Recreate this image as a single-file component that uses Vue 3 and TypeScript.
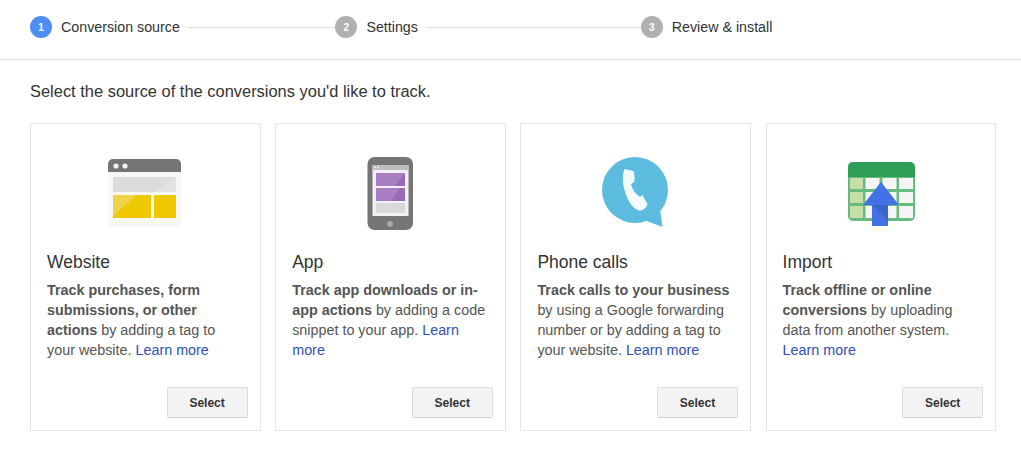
<script setup lang="ts">
interface Step { n: number; label: string; active?: boolean; }
const steps: Step[] = [
  { n: 1, label: 'Conversion source', active: true },
  { n: 2, label: 'Settings' },
  { n: 3, label: 'Review & install' },
];
interface Card { kind: string; title: string; strong: string; rest: string; }
const cards: Card[] = [
  { kind: 'web', title: 'Website', strong: 'Track purchases, form submissions, or other actions', rest: ' by adding a tag to your website. ' },
  { kind: 'app', title: 'App', strong: 'Track app downloads or in-app actions', rest: ' by adding a code snippet to your app. ' },
  { kind: 'phone', title: 'Phone calls', strong: 'Track calls to your business', rest: ' by using a Google forwarding number or by adding a tag to your website. ' },
  { kind: 'import', title: 'Import', strong: 'Track offline or online conversions', rest: ' by uploading data from another system. ' },
];
</script>

<template>
  <div class="page">
    <header class="stepper">
      <div v-for="(s, i) in steps" :key="s.n" class="step" :class="{ last: i === steps.length - 1 }">
        <span class="dot" :class="{ on: s.active }">{{ s.n }}</span>
        <span class="step-label">{{ s.label }}</span>
        <span v-if="i < steps.length - 1" class="line"></span>
      </div>
    </header>
    <main class="body">
      <p class="lead">Select the source of the conversions you'd like to track.</p>
      <div class="cards">
        <article v-for="c in cards" :key="c.kind" class="card">
          <svg class="icon" viewBox="0 0 111 95" width="111" height="95" aria-hidden="true">
            <g v-if="c.kind === 'web'">
              <rect x="18" y="14" width="73" height="68" rx="5" fill="#f7f7f7" />
              <path d="M18 27V19a5 5 0 0 1 5-5h63a5 5 0 0 1 5 5v8z" fill="#757575" />
              <circle cx="26" cy="21" r="2.6" fill="#f2f2f2" />
              <circle cx="35" cy="21" r="2.6" fill="#f2f2f2" />
              <rect x="23" y="32" width="63" height="15" fill="#dcdcdc" />
              <path d="M86 32v15H64z" fill="#e2e2e2" />
              <rect x="23" y="50" width="38" height="23" fill="#eec800" />
              <path d="M23 50h24L23 71z" fill="#eed24a" />
              <rect x="64" y="50" width="22" height="23" fill="#eec800" />
            </g>
            <g v-else-if="c.kind === 'app'">
              <rect x="32.5" y="12" width="45.5" height="73" rx="7" fill="#757575" />
              <rect x="37.5" y="20" width="36" height="51" fill="#f4f1f6" />
              <rect x="37.5" y="20" width="36" height="5" fill="#bdbdbd" />
              <circle cx="40" cy="22.5" r="1" fill="#f5f5f5" />
              <circle cx="43" cy="22.5" r="1" fill="#f5f5f5" />
              <rect x="41" y="28" width="29" height="13" fill="#a87fc2" />
              <path d="M70 28v13H60z" fill="#9a68b4" />
              <rect x="41" y="43" width="29" height="13" fill="#a87fc2" />
              <path d="M70 43v13H56l9-13z" fill="#9a68b4" />
              <rect x="41" y="58" width="29" height="10" fill="#d9d9d9" />
              <circle cx="55" cy="79" r="3" fill="#a8a8a8" />
            </g>
            <g v-else-if="c.kind === 'phone'">
              <circle cx="55" cy="45" r="33" fill="#5cbcdf" />
              <path d="M80 64 82.5 82 64 75z" fill="#5cbcdf" />
              <path transform="translate(5 0) scale(.3333)" d="M118 72 145 78Q150 85 148 110L138 118Q145 145 165 155L172 150 188 178Q180 195 165 197 135 190 120 140 108 105 118 72Z" fill="#f2fafd" />
            </g>
            <g v-else>
              <rect x="22" y="17" width="67" height="59" rx="5" fill="#68bb7e" />
              <path d="M22 32V22a5 5 0 0 1 5-5h57a5 5 0 0 1 5 5v10z" fill="#2f9e58" />
              <rect x="24" y="33" width="13" height="11" fill="#c6dfa8" />
              <rect x="24" y="47" width="13" height="11" fill="#c6dfa8" />
              <rect x="24" y="61" width="13" height="12" fill="#c6dfa8" />
              <rect x="39.5" y="33" width="14" height="11" fill="#f4f5f4" />
              <rect x="39.5" y="47" width="14" height="11" fill="#f4f5f4" />
              <rect x="39.5" y="61" width="14" height="12" fill="#f4f5f4" />
              <rect x="56.5" y="33" width="14" height="11" fill="#f4f5f4" />
              <rect x="56.5" y="47" width="14" height="11" fill="#f4f5f4" />
              <rect x="56.5" y="61" width="14" height="12" fill="#f4f5f4" />
              <rect x="73" y="33" width="14" height="11" fill="#f4f5f4" />
              <rect x="73" y="47" width="14" height="11" fill="#f4f5f4" />
              <rect x="73" y="61" width="14" height="12" fill="#f4f5f4" />
              <path d="M55 37 73 60H62V81H46V60H37z" fill="#4272e6" />
              <path d="M46 60H62V76z" fill="#3a64c8" />
            </g>
          </svg>
          <h2 class="title">{{ c.title }}</h2>
          <p class="desc"><strong>{{ c.strong }}</strong>{{ c.rest }}<a class="link">Learn more</a></p>
          <button class="select" type="button">Select</button>
        </article>
      </div>
    </main>
  </div>
</template>

<style>
html, body { margin: 0; background: #fff; }
</style>

<style scoped>
.page {
  width: 1021px;
  height: 453px;
  overflow: hidden;
  font-family: "Liberation Sans", Arial, sans-serif;
  color: #333;
}
.stepper {
  display: flex;
  align-items: center;
  padding: 0 0 5px 30px;
  height: 54px;
  border-bottom: 1px solid #ddd;
}
.step {
  display: flex;
  align-items: center;
  width: 305.4px;
  flex: none;
}
.step.last { width: auto; }
.dot {
  flex: none;
  width: 22px;
  height: 22px;
  border-radius: 50%;
  background: #b0b0b0;
  color: #fff;
  font-size: 10px;
  font-weight: 700;
  display: flex;
  align-items: center;
  justify-content: center;
}
.dot.on { background: #4d8df6; }
.step-label {
  margin-left: 9px;
  font-size: 14.25px;
  white-space: nowrap;
  color: #333;
}
.line {
  flex: 1;
  height: 1px;
  margin-left: 8px;
  background: #ddd;
}
.body { padding: 0 24px 0 30px; }
.lead {
  margin: 0;
  padding-top: 22px;
  font-size: 16.45px;
  line-height: 19px;
  color: #333;
}
.cards {
  display: flex;
  gap: 14.6px;
  margin-top: 22px;
}
.card {
  position: relative;
  box-sizing: border-box;
  flex: none;
  width: 230.6px;
  height: 308px;
  border: 1px solid #e5e5e5;
  padding: 21px 16px 0;
}
.icon {
  display: block;
  margin: 0 0 0 43px;
}
.title {
  margin: 0;
  padding-top: 11px;
  font-size: 17.5px;
  line-height: 22px;
  font-weight: 400;
  color: #333;
}
.desc {
  margin: 7px 0 0;
  font-size: 14.35px;
  line-height: 20px;
  color: #555;
}
.desc strong { font-weight: 700; color: #555; }
.link { color: #2f50b0; cursor: pointer; }
.select {
  position: absolute;
  right: 12px;
  bottom: 12px;
  width: 81px;
  height: 31px;
  box-sizing: border-box;
  border: 1px solid #dcdcdc;
  border-bottom-color: #d0d0d0;
  border-radius: 2px;
  background: #f3f3f3;
  color: #333;
  font: 700 12px "Liberation Sans", Arial, sans-serif;
  padding: 0;
}
</style>
